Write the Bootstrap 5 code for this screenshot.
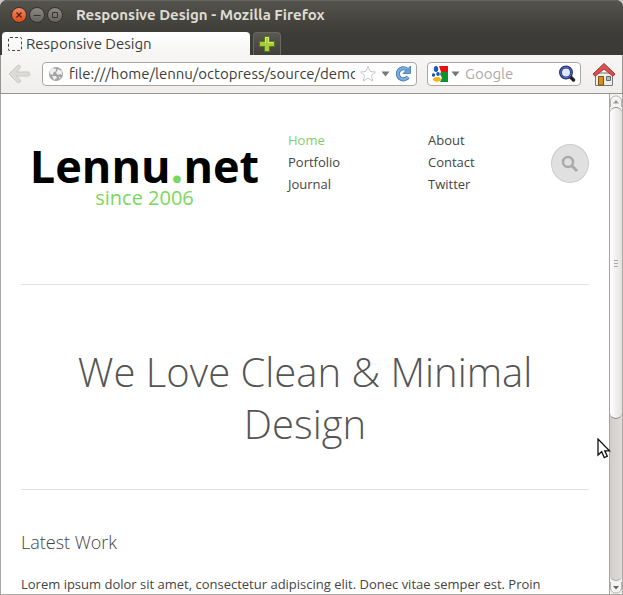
<!DOCTYPE html>
<html lang="en">
<head>
<meta charset="utf-8">
<meta name="viewport" content="width=device-width, initial-scale=1">
<title>Responsive Design</title>
<link href="https://cdn.jsdelivr.net/npm/bootstrap@5.3.0/dist/css/bootstrap.min.css" rel="stylesheet">
<style>
body{font-family:"Open Sans","Noto Sans",sans-serif;font-size:13px;line-height:22px;color:#444;background:#c9c8c5}
.window{background:#3c3b37;border-radius:7px 7px 0 0}
.chrome{font-family:Ubuntu,"Noto Sans",sans-serif;background:linear-gradient(#54534d 0,#45443f 20px,#3c3b37 34px);border-top:1px solid #66645d;border-radius:7px 7px 0 0}
.titlebar{height:27px;padding:0 11px;gap:2px}
.win-btn{width:16px;height:16px;border-radius:50%;border:1px solid #33322e;background:linear-gradient(#8b8981,#65635d);padding:0;line-height:0}
.win-btn.close-btn{background:linear-gradient(#f58863,#df4a16)}
.win-title{font-size:15px;font-weight:700;color:#dfdbd2;padding-left:11px}
.tabs{height:27px;padding-left:2px;gap:3px;padding-top:4px}
.page-tab{width:248px;background:linear-gradient(#fff,#f5f4f2);border-radius:4px 4px 0 0;font-size:15px;color:#3c3c3c;padding-left:6px;gap:4px}
.favicon{width:14px;height:14px;border:1px dashed #444;border-radius:2px}
.new-tab{width:28px;padding:0;line-height:0;border:1px solid #696861;border-bottom:0;border-radius:4px 4px 0 0;background:linear-gradient(#595851,#403f3a)}
.toolbar{font-family:Ubuntu,"Noto Sans",sans-serif;height:39px;background:linear-gradient(#f7f6f5,#efeeec);border:solid #979590;border-width:0 1px 1px;padding:0 5px 0 6px;gap:10px}
.field{height:24px;border:1px solid #aaa7a1;border-radius:4px;background:#fff}
.web-search{width:154px}
.field input{border:0;outline:0;background:none;padding:0;min-width:0;font-size:15px;color:#3c3c3c}
.field input::placeholder{color:#aaa;opacity:1}
.plain{border:0;background:none;padding:0;line-height:0}
.viewport{background:#fff;border:solid #aaa8a5;border-width:0 1px 1px}
.page{padding:0 20px}
.site-head{height:191px;padding-top:35px;border-bottom:1px solid #e0e0e0}
.logo{width:247px;color:#000;padding-top:15px}
.logo-name{font-size:45px;font-weight:700;line-height:44px}
.logo-sub{font-size:20px;line-height:20px;color:#7ad85c}
.green{color:#7ad85c}
.menu{margin-left:20px;width:140px}
.menu + .menu{margin-left:0;width:120px}
.menu a{color:#444;text-decoration:none}
.menu a.current{color:#84cf6c}
.search-btn{width:38px;height:39px;border:1px solid #ccc;border-radius:50%;background:#e0e0e0;margin-top:15px;padding:0;line-height:0}
.hero{padding:61px 50px 39px;border-bottom:1px solid #e0e0e0;font-weight:300;font-size:40px;line-height:52px;color:#555}
.section-title{font-size:18px;font-weight:300;line-height:24px;margin:40px 0 20px;color:#444}
.intro{line-height:20px}
.scrollbar{width:13px;border-left:1px solid #a6a4a0;background:#f0efee}
.scroll-btn{height:13px;border:0;padding:0;line-height:0;background:#f4f3f1}
.track{background:linear-gradient(90deg,#cfccc9,#dfdcd9);border-radius:6px;border-bottom:1px solid #aaa}
.thumb{height:66%;border:solid #908e8a;border-width:1px 0;border-radius:6px;background:linear-gradient(90deg,#fff,#e3e1de)}
.pointer{left:597px;top:438px}
</style>
<script src="https://cdn.jsdelivr.net/npm/bootstrap@5.3.0/dist/js/bootstrap.bundle.min.js"></script>
</head>
<body>
<div class="window vh-100 d-flex flex-column overflow-hidden position-relative">
  <header class="chrome">
    <div class="titlebar d-flex align-items-center">
      <button class="win-btn close-btn" aria-label="Close"><svg width="14" height="14"><path d="M4.5 4.5l5 5m0-5l-5 5" stroke="#4b2416" stroke-width="1.3"/></svg></button>
      <button class="win-btn" aria-label="Minimize"><svg width="14" height="14"><path d="M3.5 7.5h7" stroke="#35342f"/></svg></button>
      <button class="win-btn" aria-label="Maximize"><svg width="14" height="14"><path d="M4.500 4.500h5v5h-5z" stroke="#35342f" fill="none"/></svg></button>
      <div class="win-title">Responsive Design - Mozilla Firefox</div>
    </div>
    <div class="tabs d-flex">
      <div class="page-tab d-flex align-items-center"><span class="favicon"></span><span>Responsive Design</span></div>
      <button class="new-tab" aria-label="New tab"><svg width="18" height="18"><path d="M6.500 1.500h5v5h5v5h-5v5h-5v-5h-5v-5h5z" fill="#a9cd3a" stroke="#567b18"/><path d="M7.500 8v-5.500h3V7.500h5" fill="none" stroke="#d8e98b"/></svg></button>
    </div>
  </header>
  <div class="toolbar d-flex align-items-center flex-shrink-0">
    <button class="plain" aria-label="Back"><svg width="25" height="20"><path d="M10.500 1.500c1.500-1 4 .8 2.500 2.700L9.500 8H21c2.500 0 2.500 4 0 4H9.500l3.500 3.700c1.500 2-1 3.800-2.500 2.600L2 10z" fill="#dddbd7" stroke="#c9c7c3"/></svg></button>
    <div class="field d-flex align-items-center flex-grow-1 px-1">
      <svg width="18" height="16" class="flex-shrink-0"><circle cx="9" cy="8" r="7" fill="#a3a3a3"/><path d="M3 4l3-2 3 1 0 2-3 2 0 2-3-1zM11 3l4 2 0 4-2-1-2 1-2-2zM5 10l4 0 1 2-3 2zM12 11l2 0-2 2z" fill="#eee"/></svg>
      <input class="flex-grow-1 ms-1" aria-label="Address" value="file:///home/lennu/octopress/source/demo/index.html">
      <button class="plain ms-1" aria-label="Bookmark"><svg width="18" height="18"><path d="M9 1.500l2.200 5 5.300.5-4 3.600 1.200 5.400L9 13.200 4.300 16l1.200-5.400-4-3.600 5.300-.5z" fill="#fff" stroke="#c8c8c8"/></svg></button>
      <button class="plain ms-1" aria-label="History"><svg width="9" height="6"><path d="M.5.5h8L4.500 5.500z" fill="#777"/></svg></button>
      <button class="plain ms-1" aria-label="Reload"><svg width="18" height="18"><path d="M12.800 4.300A5.600 5.600 0 1 0 14 12" fill="none" stroke="#3d78b4" stroke-width="4"/><path d="M12.800 4.300A5.600 5.600 0 1 0 14 12" fill="none" stroke="#79ace0" stroke-width="2.500"/><path d="M16.500 1v7.500H9z" fill="#69a0d8" stroke="#3d78b4" stroke-width=".8"/></svg></button>
    </div>
    <div class="field web-search d-flex align-items-center ps-1 pe-1">
      <svg width="16" height="16" class="flex-shrink-0"><path fill="#fff" d="M0 0h16v16H0z"/><path d="M7 0h9v6H9z" fill="#e8110f"/><path d="M9 6h7v10H8l2-4-2-4z" fill="#0a9430"/><ellipse cx="4" cy="3" rx="2.200" ry="3" fill="#1a56c4"/><ellipse cx="6" cy="8" rx="1.800" ry="2" fill="#1a56c4"/><circle cx="1.500" cy="9" r="1.700" fill="#1a56c4"/><ellipse cx="5" cy="13.300" rx="3.800" ry="2.400" fill="#f5b315"/></svg>
      <svg width="13" height="6" class="flex-shrink-0"><path d="M3.500.5h8L7.500 5.500z" fill="#777"/></svg>
      <input class="flex-grow-1 ms-1" aria-label="Search the web" placeholder="Google">
      <button class="plain" aria-label="Search"><svg width="18" height="18"><path d="M12 11.500l3.500 3.500" stroke="#222" stroke-width="3.500" stroke-linecap="round"/><circle cx="8" cy="7.500" r="5.500" fill="#dfe8f6" stroke="#26357f" stroke-width="3"/><circle cx="8" cy="7.500" r="5.300" fill="none" stroke="#5c72ba"/></svg></button>
    </div>
    <button class="plain" aria-label="Home page"><svg width="26" height="25"><path d="M4.500 11h17v12.500h-17z" fill="#eeeeeb" stroke="#777"/><path d="M7.500 14.500h5v8.500h-5z" fill="#d68f1c" stroke="#80520c"/><path d="M15.500 14.500h4v4h-4z" fill="#a9c1cc" stroke="#666"/><path d="M2 12L13 1.500 24 12l-2 2.300L13 7l-9 7.300z" fill="#d55252" stroke="#a83030"/></svg></button>
  </div>
  <div class="viewport d-flex flex-grow-1 overflow-hidden">
    <main class="page flex-grow-1 overflow-hidden">
      <div class="site-head d-flex align-items-start">
        <div class="logo text-center flex-shrink-0"><div class="logo-name">Lennu<span class="green">.</span>net</div><div class="logo-sub">since 2006</div></div>
        <nav class="menu d-flex flex-column align-items-start"><a class="current" href="#">Home</a><a href="#">Portfolio</a><a href="#">Journal</a></nav>
        <nav class="menu d-flex flex-column align-items-start"><a href="#">About</a><a href="#">Contact</a><a href="#">Twitter</a></nav>
        <button class="search-btn ms-auto flex-shrink-0" aria-label="Search site"><svg width="18" height="18"><circle cx="7" cy="7" r="5" fill="none" stroke="#aaa" stroke-width="2.500"/><path d="M10.500 10.500l5.500 5.500" stroke="#aaa" stroke-width="3"/></svg></button>
      </div>
      <h1 class="hero text-center m-0">We Love Clean &amp; Minimal Design</h1>
      <h2 class="section-title">Latest Work</h2>
      <p class="intro m-0">Lorem ipsum dolor sit amet, consectetur adipiscing elit. Donec vitae semper est. Proin</p>
    </main>
    <div class="scrollbar d-flex flex-column flex-shrink-0">
      <button class="scroll-btn" aria-label="Scroll up"><svg width="12" height="12"><path d="M3 8.500h6L6 5z" fill="#999"/><path d="M.5 12V6a5 5 0 0 1 5-5h1a5 5 0 0 1 5 5v6" fill="none" stroke="#b5b2ae"/></svg></button>
      <div class="track flex-grow-1"><div class="thumb d-flex align-items-center justify-content-center"><svg width="6" height="8"><path d="M1 1.500h4M1 4.500h4M1 7.500h4" stroke="#aaa"/></svg></div></div>
      <button class="scroll-btn" aria-label="Scroll down"><svg width="12" height="12"><path d="M3 4h6L6 7.500z" fill="#666"/><path d="M.5 0v6a5 5 0 0 0 5 5h1a5 5 0 0 0 5-5V0" fill="none" stroke="#b5b2ae"/></svg></button>
    </div>
  </div>
  <svg class="pointer position-absolute" width="14" height="22"><path d="M1 1v16l3.700-3.300 2.600 6 3-1.400-2.600-5.500h4.800z" fill="#fff" stroke="#111" stroke-width="1.300"/></svg>
</div>
</body>
</html>
